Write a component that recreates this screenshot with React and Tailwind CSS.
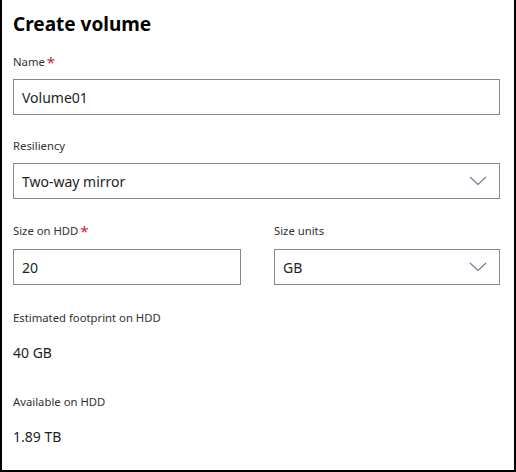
import React from "react";

const font = { fontFamily: '"Noto Sans", "Segoe UI", sans-serif' };

function Chevron() {
  return (
    <svg width="18" height="10" viewBox="0 0 18 10" fill="none" className="shrink-0">
      <path d="M1 1 L9 8.5 L17 1" stroke="#7b6f96" strokeWidth="1.1" />
    </svg>
  );
}

function Label({ children, required }) {
  return (
    <div className="h-4 text-[11.3px] leading-4 text-[#323130] flex items-start">
      <span>{children}</span>
      {required && <span className="text-[15px] leading-4 ml-[2px] text-[#d7193f]">*</span>}
    </div>
  );
}

function TextBox({ value, className = "" }) {
  return (
    <div className={"h-9 border border-[#8a8886] bg-white flex items-center px-2 text-[14px] text-[#201f1e] " + className}>
      {value}
    </div>
  );
}

function Dropdown({ value, className = "" }) {
  return (
    <div className={"h-9 border border-[#8a8886] bg-white flex items-center justify-between pl-2 pr-3 text-[14px] text-[#201f1e] " + className}>
      <span>{value}</span>
      <Chevron />
    </div>
  );
}

export default function App() {
  return (
    <div style={font} className="w-[516px] h-[472px] bg-white border-l-2 border-r-2 border-b-2 border-black box-border">
      <div className="pl-[11px] pr-[14px] pt-[10px]">
        <h1 className="text-[19px] leading-7 font-bold text-[#000]">Create volume</h1>
        <div className="mt-4">
          <Label required>Name</Label>
          <TextBox value="Volume01" className="mt-[9px]" />
        </div>
        <div className="mt-[23px]">
          <Label>Resiliency</Label>
          <Dropdown value="Two-way mirror" className="mt-[9px]" />
        </div>
        <div className="mt-[24px] flex gap-[33px]">
          <div className="w-[228px]">
            <Label required>Size on HDD</Label>
            <TextBox value="20" className="mt-[10px]" />
          </div>
          <div className="flex-1">
            <Label>Size units</Label>
            <Dropdown value="GB" className="mt-[10px]" />
          </div>
        </div>
        <div className="mt-[25px]">
          <Label>Estimated footprint on HDD</Label>
          <div className="mt-[17px] text-[14px] leading-5 text-[#201f1e]">40 GB</div>
        </div>
        <div className="mt-[31px]">
          <Label>Available on HDD</Label>
          <div className="mt-[17px] text-[14px] leading-5 text-[#201f1e]">1.89 TB</div>
        </div>
      </div>
    </div>
  );
}
